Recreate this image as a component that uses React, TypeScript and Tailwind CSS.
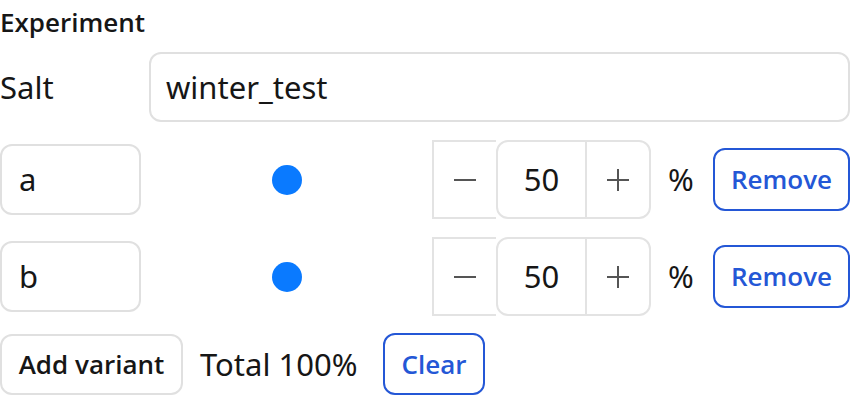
import React from "react";

const font = { fontFamily: '"Noto Sans", "Open Sans", sans-serif' };
const semi = { fontFamily: '"Open Sans", "Noto Sans", sans-serif' };

function Minus() {
  return (
    <svg width="22" height="22" viewBox="0 0 22 22">
      <line x1="0" y1="11" x2="22" y2="11" stroke="#555" strokeWidth="2" />
    </svg>
  );
}
function Plus() {
  return (
    <svg width="22" height="22" viewBox="0 0 22 22">
      <line x1="0" y1="11" x2="22" y2="11" stroke="#555" strokeWidth="2" />
      <line x1="11" y1="0" x2="11" y2="22" stroke="#555" strokeWidth="2" />
    </svg>
  );
}

function VariantRow({ name }: { name: string }) {
  return (
    <div className="flex h-[79px] items-center pr-[2px]">
      <div className="flex h-[71px] w-[141px] items-center rounded-[12px] border-2 border-[#e0e0e0] pl-[17px] text-[31px] text-[#161616]">
        {name}
      </div>
      <div className="flex flex-1 items-center justify-center">
        <div className="h-[30px] w-[30px] rounded-full bg-[#0a7aff]" />
      </div>
      <div className="flex h-[79px] w-[64px] items-center justify-center border-2 border-r-0 border-[#e3e3e3]">
        <Minus />
      </div>
      <div className="flex h-[79px] w-[155px] rounded-[12px] border-2 border-[#e3e3e3]">
        <div className="flex w-[89px] items-center justify-center border-r-2 border-[#e3e3e3] text-[31px] text-[#161616]">
          50
        </div>
        <div className="flex flex-1 items-center justify-center">
          <Plus />
        </div>
      </div>
      <div className="ml-[17px] w-[28px] text-[31px] text-[#161616]">%</div>
      <button
        className="ml-[17px] flex h-[63px] w-[137px] items-center justify-center rounded-[12px] border-2 border-[#2457d6] text-[26px] font-semibold text-[#2457d6]"
        style={semi}
      >
        Remove
      </button>
    </div>
  );
}

export default function App() {
  return (
    <div className="h-[412px] w-[852px] bg-white" style={font}>
      <div className="flex flex-col">
        <div className="h-[44px] text-[26px] font-semibold leading-[44px] text-[#161616]" style={semi}>
          Experiment
        </div>
        <div className="mt-[8px] flex h-[70px] items-center pr-[2px]">
          <div className="w-[149px] text-[31px] text-[#161616]">Salt</div>
          <div className="flex h-[70px] flex-1 items-center rounded-[12px] border-2 border-[#e0e0e0] pl-[15px] text-[31px] text-[#161616]">
            winter_test
          </div>
        </div>
        <div className="mt-[18px]">
          <VariantRow name="a" />
        </div>
        <div className="mt-[18px]">
          <VariantRow name="b" />
        </div>
        <div className="mt-[17px] flex h-[62px] items-center">
          <button
            className="flex h-[61px] w-[183px] items-center justify-center rounded-[12px] border-2 border-[#e0e0e0] text-[26px] font-semibold text-[#161616]"
            style={semi}
          >
            Add variant
          </button>
          <div className="ml-[17px] w-[163px] whitespace-nowrap text-[31px] text-[#161616]">Total 100%</div>
          <button
            className="ml-[20px] flex h-[62px] w-[102px] items-center justify-center rounded-[12px] border-2 border-[#2457d6] text-[26px] font-semibold text-[#2457d6]"
            style={semi}
          >
            Clear
          </button>
        </div>
      </div>
    </div>
  );
}
